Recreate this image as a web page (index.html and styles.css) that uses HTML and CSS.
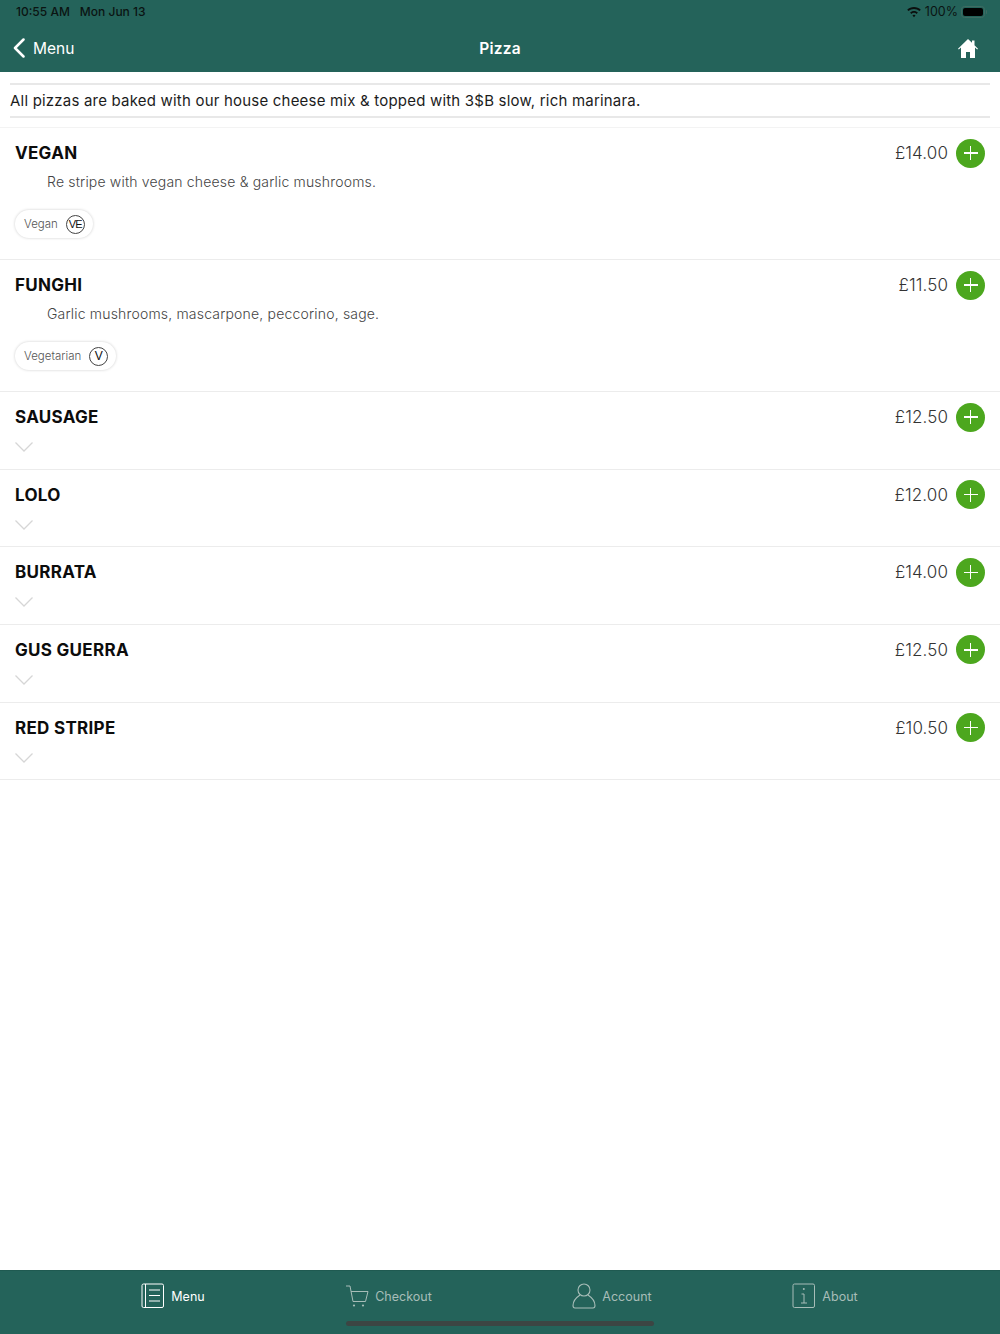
FILE: index.html
```html
<!DOCTYPE html>
<html lang="en">
<head>
<meta charset="utf-8">
<title>Pizza</title>
<link rel="stylesheet" href="styles.css">
</head>
<body>
<div class="app">
  <header class="header">
    <div class="status">
      <div class="status-left"><span>10:55 AM</span><span>Mon Jun 13</span></div>
      <div class="status-right">
        <svg class="wifi" viewBox="0 0 16 12" width="16" height="12"><path d="M8 8.700a1.700 1.700 0 0 1 1.500.8L8 11.300 6.500 9.500A1.700 1.700 0 0 1 8 8.700zM8 4.900c1.500 0 2.900.6 3.900 1.600l-1.300 1.400A3.700 3.700 0 0 0 8 6.800c-1 0-1.900.4-2.600 1.100L4.100 6.500C5.100 5.500 6.500 4.900 8 4.900zM8 1c2.600 0 5 1 6.800 2.700l-1.300 1.400A8 8 0 0 0 8 2.900c-2.100 0-4 .8-5.500 2.200L1.200 3.700C3 2 5.400 1 8 1z" fill="#0b0f0e"/></svg>
        <span>100%</span>
        <span class="battery"><span class="battery-fill"></span></span>
      </div>
    </div>
    <nav class="nav">
      <a class="back">
        <svg viewBox="0 0 14 20" width="14" height="20"><path d="M11.500 1.500 3 10l8.500 8.500" fill="none" stroke="#fff" stroke-width="2.500" stroke-linecap="round" stroke-linejoin="round"/></svg>
        <span>Menu</span>
      </a>
      <h1 class="title">Pizza</h1>
      <svg class="home" viewBox="0 0 20 19" width="20" height="19"><path d="M10 0 0 9.700l.8.900L3 8.600V19h5v-6h4v6h5V8.600l2.200 2 .8-.9L16.500 6.300V1.500h-2.500v2.300z" fill="#fff"/></svg>
    </nav>
  </header>

  <main class="main">
    <p class="intro">All pizzas are baked with our house cheese mix &amp; topped with 3$B slow, rich marinara.</p>

    <section class="item item-open">
      <div class="item-row"><h2 class="item-name">VEGAN</h2><div class="buy"><span class="price">£14.00</span><button class="add"><span class="plus"></span></button></div></div>
      <p class="desc">Re stripe with vegan cheese &amp; garlic mushrooms.</p>
      <span class="tag">Vegan<span class="badge badge-wide">VE</span></span>
    </section>

    <section class="item item-open">
      <div class="item-row"><h2 class="item-name">FUNGHI</h2><div class="buy"><span class="price">£11.50</span><button class="add"><span class="plus"></span></button></div></div>
      <p class="desc">Garlic mushrooms, mascarpone, peccorino, sage.</p>
      <span class="tag">Vegetarian<span class="badge">V</span></span>
    </section>

    <section class="item">
      <div class="item-row"><h2 class="item-name">SAUSAGE</h2><div class="buy"><span class="price">£12.50</span><button class="add"><span class="plus"></span></button></div></div>
      <svg class="chev" viewBox="0 0 18 10" width="18" height="10"><path d="M.5.500 9 9 17.500.500" fill="none" stroke="#d6d6d6" stroke-width="1.300"/></svg>
    </section>

    <section class="item">
      <div class="item-row"><h2 class="item-name">LOLO</h2><div class="buy"><span class="price">£12.00</span><button class="add"><span class="plus"></span></button></div></div>
      <svg class="chev" viewBox="0 0 18 10" width="18" height="10"><path d="M.5.500 9 9 17.500.500" fill="none" stroke="#d6d6d6" stroke-width="1.300"/></svg>
    </section>

    <section class="item">
      <div class="item-row"><h2 class="item-name">BURRATA</h2><div class="buy"><span class="price">£14.00</span><button class="add"><span class="plus"></span></button></div></div>
      <svg class="chev" viewBox="0 0 18 10" width="18" height="10"><path d="M.5.500 9 9 17.500.500" fill="none" stroke="#d6d6d6" stroke-width="1.300"/></svg>
    </section>

    <section class="item">
      <div class="item-row"><h2 class="item-name">GUS GUERRA</h2><div class="buy"><span class="price">£12.50</span><button class="add"><span class="plus"></span></button></div></div>
      <svg class="chev" viewBox="0 0 18 10" width="18" height="10"><path d="M.5.500 9 9 17.500.500" fill="none" stroke="#d6d6d6" stroke-width="1.300"/></svg>
    </section>

    <section class="item">
      <div class="item-row"><h2 class="item-name">RED STRIPE</h2><div class="buy"><span class="price">£10.50</span><button class="add"><span class="plus"></span></button></div></div>
      <svg class="chev" viewBox="0 0 18 10" width="18" height="10"><path d="M.5.500 9 9 17.500.500" fill="none" stroke="#d6d6d6" stroke-width="1.300"/></svg>
    </section>
  </main>

  <footer class="tabbar">
    <div class="tabs">
      <a class="tab tab-active">
        <svg viewBox="0 0 24 26" width="24" height="26" fill="none" stroke="currentColor" stroke-width="1"><rect x="1" y="1" width="21.500" height="23.500" rx="1.500"/><path d="M4.500 1v23.500M8 7h11M8 12.500h11M8 18h11"/></svg>
        <span>Menu</span>
      </a>
      <a class="tab">
        <svg viewBox="0 0 24 24" width="24" height="24" fill="none" stroke="currentColor" stroke-width="1"><path d="M1 2h4l3 15.500h12.500L23 7.500H6"/><circle cx="9" cy="21.500" r="1.100" fill="currentColor" stroke="none"/><circle cx="18" cy="21.500" r="1.100" fill="currentColor" stroke="none"/></svg>
        <span>Checkout</span>
      </a>
      <a class="tab">
        <svg viewBox="0 0 24 26" width="24" height="26" fill="none" stroke="currentColor" stroke-width="1.100"><circle cx="12" cy="7" r="6"/><path d="M8 12c-3 2-7 6-7 10.500 0 1.500.8 2.500 2 2.500h18c1.200 0 2-1 2-2.500C23 18 19 14 16 12"/></svg>
        <span>Account</span>
      </a>
      <a class="tab">
        <svg viewBox="0 0 24 26" width="24" height="26" fill="none" stroke="currentColor" stroke-width="1"><rect x="1" y="1" width="21.500" height="23.500" rx="1.500"/><path d="M9.500 11h2.500v9M9 20h6"/><circle cx="11.800" cy="6" r="1" fill="currentColor" stroke="none"/></svg>
        <span>About</span>
      </a>
    </div>
    <div class="home-indicator"></div>
  </footer>
</div>
</body>
</html>
```

FILE: styles.css
```css
* { box-sizing: border-box; }
html, body { margin: 0; padding: 0; height: 100%; }
body { background: #fff; font-family: "Inter", sans-serif; color: #111; }
.app { height: 1334px; display: flex; flex-direction: column; overflow: hidden; }

.header { height: 72px; background: #24635a; flex: none; }
.status { height: 23px; padding: 0 15px 0 16px; display: flex; justify-content: space-between; align-items: center; font: 500 12px "Inter", sans-serif; color: #0b1412; }
.status-left { display: flex; gap: 10px; }
.status-right { display: flex; align-items: center; gap: 3px; font-size: 12.500px; font-weight: 400; }
.battery { width: 24px; height: 12px; border: 1px solid #3f6b62; border-radius: 3.500px; padding: 1px; display: flex; position: relative; }
.battery::after { content: ""; position: absolute; right: -3px; top: 3px; width: 1.500px; height: 4px; background: #3f6b62; border-radius: 0 1px 1px 0; }
.battery-fill { flex: 1; background: #000; border-radius: 2px; }
.nav { height: 49px; display: grid; grid-template-columns: 1fr auto 1fr; align-items: center; padding: 1px 22px 0 12px; color: #fff; }
.back { display: flex; align-items: center; gap: 7px; font: 15.500px "Inter", sans-serif; }
.title { margin: 0; font: 600 15.500px "Inter", sans-serif; letter-spacing: .2px; transform: translateX(5px); }
.home { justify-self: end; }

.main { flex: 1; }
.intro { margin: 11px 10px 0; height: 35px; border-top: 2px solid #e8e8e8; border-bottom: 2px solid #e8e8e8; font: 15px/31px "Inter", sans-serif; color: #1c1c1c; letter-spacing: .2px; }
.item { border-top: 1px solid #ececec; padding: 0 15px; height: 77.670px; }
.item:first-of-type { margin-top: 9px; border-top-color: #f3f3f3; }
.item-open { height: 132px; }
.item:last-of-type { height: 78.500px; border-bottom: 1px solid #ececec; }
.item-row { display: flex; justify-content: space-between; align-items: center; height: 50px; }
.item-name { margin: 0; font: 700 17px "Inter", sans-serif; color: #0c0c0c; letter-spacing: .3px; }
.buy { display: flex; align-items: center; gap: 8px; }
.price { font: 300 17px "Inter", sans-serif; color: #333; letter-spacing: .1px; }
.add { width: 29px; height: 29px; border-radius: 50%; border: 0; padding: 0; background: #4ca71e; position: relative; }
.plus { position: absolute; left: 7.500px; top: 13.750px; width: 14px; height: 1.500px; background: #fff; }
.plus::after { content: ""; position: absolute; left: 6.250px; top: -6.250px; width: 1.500px; height: 14px; background: #fff; }
.desc { margin: -5px 0 0 32px; height: 37px; font: 300 14px/18px "Inter", sans-serif; color: #444; letter-spacing: .18px; }
.tag { display: inline-flex; align-items: center; gap: 8px; height: 28px; padding: 0 8px 0 9px; border-radius: 14px; background: #fff; box-shadow: 0 0 3px rgba(0,0,0,.2); font: 300 11.500px "Inter", sans-serif; color: #555; }
.badge { width: 19px; height: 19px; border-radius: 50%; border: 1px solid #444; display: flex; align-items: center; justify-content: center; font: 12px "Liberation Sans", sans-serif; color: #111; }
.badge-wide { font-size: 11px; letter-spacing: -.7px; }
.chev { display: block; }

.tabbar { height: 64px; flex: none; background: #24635a; border-top: 1px solid #1f5a51; position: relative; }
.tabs { display: grid; grid-template-columns: 216px 215px 232px 194px; height: 50px; padding: 12px 0 0 65px; }
.tab { display: flex; align-items: center; gap: 6px; color: #a7bdb8; font: 12.500px "Inter", sans-serif; justify-content: center; height: 26px; }
.tab-active { color: #fff; }
.home-indicator { position: absolute; left: 346px; bottom: 8px; width: 308px; height: 5px; border-radius: 3px; background: #3c4543; }
```
